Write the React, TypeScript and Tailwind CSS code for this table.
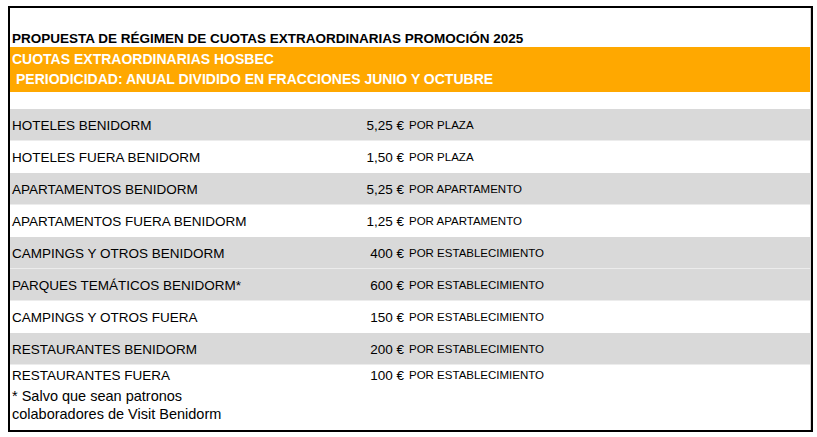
const rows = [
  { label: "HOTELES BENIDORM", price: "5,25 €", unit: "POR PLAZA", gray: true },
  { label: "HOTELES FUERA BENIDORM", price: "1,50 €", unit: "POR PLAZA", gray: false },
  { label: "APARTAMENTOS BENIDORM", price: "5,25 €", unit: "POR APARTAMENTO", gray: true },
  { label: "APARTAMENTOS FUERA BENIDORM", price: "1,25 €", unit: "POR APARTAMENTO", gray: false },
  { label: "CAMPINGS Y OTROS BENIDORM", price: "400 €", unit: "POR ESTABLECIMIENTO", gray: true },
  { label: "PARQUES TEMÁTICOS BENIDORM*", price: "600 €", unit: "POR ESTABLECIMIENTO", gray: true },
  { label: "CAMPINGS Y OTROS FUERA", price: "150 €", unit: "POR ESTABLECIMIENTO", gray: false },
  { label: "RESTAURANTES BENIDORM", price: "200 €", unit: "POR ESTABLECIMIENTO", gray: true },
];

function Price({ price, unit }: { price: string; unit: string }) {
  return (
    <div className="flex items-start">
      <span className="w-[392px] text-right text-[13.5px] leading-[18px]">{price}</span>
      <span className="ml-[5px] pt-[1px] text-[11.5px] leading-[14px]">{unit}</span>
    </div>
  );
}

export default function App() {
  return (
    <div className="h-[437px] w-[817px] bg-white pl-[8px] pt-[6px] font-['Liberation_Sans',Arial,sans-serif] text-black">
      <div className="flex h-[426px] w-[805px] flex-col border-2 border-black">
        <div className="flex flex-1 flex-col border-r border-[#d4d4d4]">
          {/* titulo */}
          <div className="h-[39px] pl-[2px] pt-[23px] text-[13.5px] font-bold leading-[16px]">
            PROPUESTA DE RÉGIMEN DE CUOTAS EXTRAORDINARIAS PROMOCIÓN 2025
          </div>

          <div className="h-[45px] bg-[#ffa800] pl-[2px] pt-[2px] text-[14px] font-bold leading-[20px] text-white">
            <div>CUOTAS EXTRAORDINARIAS HOSBEC</div>
            <div className="pl-[4px]">PERIODICIDAD: ANUAL DIVIDIDO EN FRACCIONES JUNIO Y OCTUBRE</div>
          </div>

          <div className="h-[17px]" />

          {rows.map((r, i) => (
            <div
              key={i}
              className={
                "flex h-[32px] items-center pl-[2px] pt-[2px] " +
                (r.gray ? "border-b border-[#ececec] bg-[#d9d9d9]" : "bg-white")
              }
            >
              <span className="w-0 whitespace-nowrap text-[13.5px] leading-[18px]">{r.label}</span>
              <Price price={r.price} unit={r.unit} />
            </div>
          ))}

          <div className="pl-[2px] pt-[2px] text-[13.5px] leading-[18px]">
            <div className="flex h-[20px]">
              <span className="w-0 whitespace-nowrap">RESTAURANTES FUERA</span>
              <Price price="100 €" unit="POR ESTABLECIMIENTO" />
            </div>
            <div className="text-[14.5px]">* Salvo que sean patronos</div>
            <div className="text-[14.5px]">colaboradores de Visit Benidorm</div>
          </div>
        </div>
      </div>
    </div>
  );
}
